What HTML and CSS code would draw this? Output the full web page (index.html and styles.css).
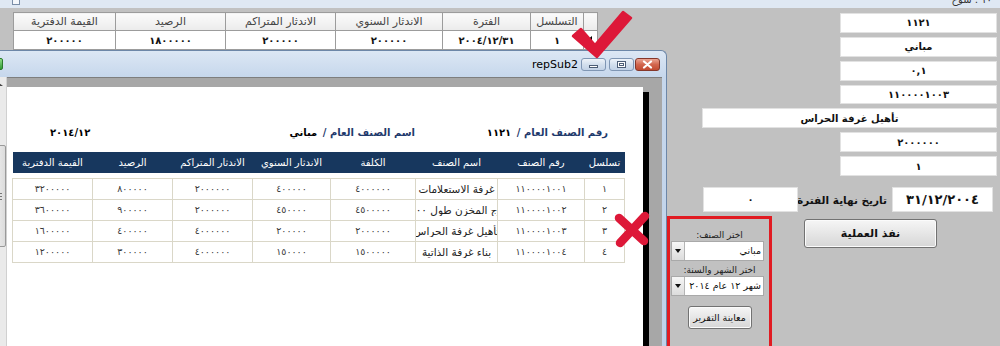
FILE: index.html
```html
<!DOCTYPE html>
<html lang="ar">
<head>
    <meta charset="UTF-8">
    <meta name="viewport" content="width=device-width, initial-scale=1.0">
    <title>repSub2</title>
    <link rel="stylesheet" href="styles.css">
</head>
<body>
<div class="desk">
    <div class="caption">
        <span class="caption-icon"></span>
        <span class="caption-text">١٠ : شوح</span>
    </div>

    <div class="client">
        <div class="grid-wrap">
            <table class="grid">
                <colgroup>
                    <col style="width:14px"><col style="width:53px"><col style="width:88px"><col style="width:107px">
                    <col style="width:110px"><col style="width:110px"><col style="width:102px">
                </colgroup>
                <tr>
                    <th></th><th>التسلسل</th><th>الفترة</th><th>الاندثار السنوي</th>
                    <th>الاندثار المتراكم</th><th>الرصيد</th><th>القيمة الدفترية</th>
                </tr>
                <tr>
                    <td class="sel"><span class="cur"></span></td><td>١</td><td>٢٠٠٤/١٢/٣١</td><td>٢٠٠٠٠٠</td>
                    <td>٢٠٠٠٠٠</td><td>١٨٠٠٠٠٠</td><td>٢٠٠٠٠٠</td>
                </tr>
            </table>
        </div>

        <div class="fields">
            <div class="box">١١٢١</div>
            <div class="box">مباني</div>
            <div class="box">٠,١</div>
            <div class="box">١١٠٠٠٠١٠٠٣</div>
            <div class="box wide">تأهيل غرفة الحراس</div>
            <div class="box">٢٠٠٠٠٠٠</div>
            <div class="box">١</div>
            <div class="date-row">
                <div class="box date">٣١/١٢/٢٠٠٤</div>
                <div class="date-label">تاريخ نهاية الفترة</div>
                <div class="box zero">٠</div>
            </div>
            <div class="bottom-row">
                <div class="panel">
                    <div class="panel-label">اختر الصنف:</div>
                    <div class="combo"><span class="combo-btn"></span><span class="combo-text">مباني</span></div>
                    <div class="panel-label second">اختر الشهر والسنة:</div>
                    <div class="combo"><span class="combo-btn"></span><span class="combo-text">شهر ١٢ عام ٢٠١٤</span></div>
                    <button class="btn preview">معاينة التقرير</button>
                </div>
                <button class="btn run">نفذ العملية</button>
            </div>
        </div>
    </div>

    <!-- child report window -->
    <div class="child">
        <div class="child-title">
            <span class="child-icon"></span>
            <span class="child-name">repSub2</span>
            <span class="cap-btn min"><i></i></span>
            <span class="cap-btn max"><i></i></span>
            <span class="cap-btn close">
                <svg width="11" height="9" viewBox="0 0 11 9"><path d="M2 1.5L9 7.5M9 1.5L2 7.5" stroke="#fff" stroke-width="2.2" stroke-linecap="round"/></svg>
            </span>
        </div>
        <div class="child-body">
            <div class="vscroll">
                <span class="vs-up"></span>
                <span class="vs-thumb"></span>
            </div>
            <div class="viewer">
                <div class="page">
                    <div class="rep-head">
                        <div class="rh-item first"><span class="lbl">رقم الصنف العام /</span> <span class="val">١١٢١</span></div>
                        <div class="rh-item second"><span class="lbl">اسم الصنف العام /</span> <span class="val">مباني</span></div>
                        <div class="rh-item third"><span class="val date">٢٠١٤/١٢</span></div>
                    </div>
                    <table class="rep">
                        <colgroup>
                            <col style="width:40px"><col style="width:87px"><col style="width:82px"><col style="width:85px">
                            <col style="width:78px"><col style="width:80px"><col style="width:80px"><col style="width:80px">
                        </colgroup>
                        <tr>
                            <th>تسلسل</th><th>رقم الصنف</th><th>اسم الصنف</th><th>الكلفة</th>
                            <th>الاندثار السنوي</th><th>الاندثار المتراكم</th><th>الرصيد</th><th>القيمة الدفترية</th>
                        </tr>
                        <tr class="gap"><td colspan="8"></td></tr>
                        <tr>
                            <td>١</td><td>١١٠٠٠٠١٠٠١</td><td class="name"><div class="clip"><span>غرفة الاستعلامات</span></div></td>
                            <td>٤٠٠٠٠٠٠</td><td>٤٠٠٠٠٠</td><td>٢٠٠٠٠٠٠</td><td>٨٠٠٠٠٠</td><td>٣٢٠٠٠٠٠</td>
                        </tr>
                        <tr>
                            <td>٢</td><td>١١٠٠٠٠١٠٠٢</td><td class="name"><div class="clip"><span>سياج المخزن طول ٤٠٠ م</span></div></td>
                            <td>٤٥٠٠٠٠٠</td><td>٤٥٠٠٠٠</td><td>٢٠٠٠٠٠٠</td><td>٩٠٠٠٠٠</td><td>٣٦٠٠٠٠٠</td>
                        </tr>
                        <tr>
                            <td>٣</td><td>١١٠٠٠٠١٠٠٣</td><td class="name"><div class="clip"><span>تأهيل غرفة الحراس</span></div></td>
                            <td>٢٠٠٠٠٠٠</td><td>٢٠٠٠٠٠</td><td>٤٠٠٠٠٠٠</td><td>٤٠٠٠٠٠</td><td>١٦٠٠٠٠٠</td>
                        </tr>
                        <tr>
                            <td>٤</td><td>١١٠٠٠٠١٠٠٤</td><td class="name"><div class="clip"><span>بناء غرفة الذاتية</span></div></td>
                            <td>١٥٠٠٠٠٠</td><td>١٥٠٠٠٠</td><td>٤٠٠٠٠٠٠</td><td>٣٠٠٠٠٠</td><td>١٢٠٠٠٠٠</td>
                        </tr>
                    </table>
                </div>
                <div class="page-shadow"></div>
            </div>
        </div>
    </div>

    <!-- red hand marks drawn over the screenshot -->
    <svg class="mark mark-check" viewBox="0 0 64 52">
        <path d="M3 28L11 21L25 37L53 4L61 10L27 49Z" fill="#dd1838" stroke="#dd1838" stroke-width="2.5" stroke-linejoin="round"/>
    </svg>
    <svg class="mark mark-x" viewBox="0 0 40 38">
        <path d="M7 7L32 30M33 5L8 32" stroke="#dd1838" stroke-width="8.5" stroke-linecap="round"/>
    </svg>
</div>
</body>
</html>
```

FILE: styles.css
```css
*{
    margin: 0;
    padding: 0;
    box-sizing: border-box;
}
body{
    width: 1000px;
    height: 346px;
    overflow: hidden;
    background: #c1c1c1;
    font-family: "DejaVu Sans", sans-serif;
    color: #111;
}
.desk{
    position: relative;
    width: 1000px;
    height: 346px;
    overflow: hidden;
}

/* main window caption strip */
.caption{
    height: 8px;
    background: #dfe8f3;
    overflow: hidden;
    display: flex;
    justify-content: space-between;
    align-items: flex-start;
}
.caption-icon{
    width: 8px;
    height: 5px;
    margin-left: 12px;
    border: 1px solid #7a8ea8;
    border-top: none;
    background: #f4f7fb;
}
.caption-text{
    font-size: 10px;
    line-height: 10px;
    margin-top: -5px;
    padding-right: 8px;
    color: #333;
    direction: rtl;
}

.client{
    display: flex;
    height: 338px;
}

/* top data grid */
.grid-wrap{
    padding: 4px 0 0 13px;
}
.grid{
    width: 584px;
    border-collapse: collapse;
    table-layout: fixed;
    direction: rtl;
    background: #fff;
}
.grid th{
    height: 18px;
    font-size: 11px;
    font-weight: normal;
    color: #444;
    white-space: nowrap;
    background: linear-gradient(#fbfbfb, #ebebeb);
    border: 1px solid #9c9c9c;
}
.grid td{
    height: 19px;
    text-align: center;
    font-size: 10px;
    font-weight: bold;
    border: 1px solid #9c9c9c;
    border-top-color: #cfcfcf;
}
.grid td.sel{
    text-align: left;
    padding-left: 2px;
}
.cur{
    display: inline-block;
    vertical-align: middle;
    border-right: 6px solid #000;
    border-top: 5px solid transparent;
    border-bottom: 5px solid transparent;
}

/* right hand fields */
.fields{
    margin-left: auto;
    width: 333px;
    padding: 5px 3px 0 0;
    display: flex;
    flex-direction: column;
    align-items: flex-end;
    gap: 4px;
}
.box{
    width: 157px;
    height: 21px;
    background: #fff;
    border: 1px solid #e2e2e2;
    display: flex;
    align-items: center;
    justify-content: center;
    direction: rtl;
    font-size: 10px;
    font-weight: bold;
    white-space: nowrap;
}
.box.wide{
    width: 295px;
}
.date-row{
    display: flex;
    direction: rtl;
    align-items: center;
    margin-top: 7px;
}
.box.date{
    width: 101px;
    height: 25px;
    margin-right: 4px;
    font-size: 13px;
}
.date-label{
    width: 80px;
    margin: 0 5px 0 9px;
    text-align: center;
    font-size: 10.5px;
    font-weight: bold;
    white-space: nowrap;
}
.box.zero{
    width: 95px;
    height: 25px;
}
.bottom-row{
    align-self: stretch;
    display: flex;
    justify-content: space-between;
    align-items: flex-start;
}
.panel{
    width: 105px;
    height: 130px;
    border: 3px solid #e11b22;
    border-bottom: none;
    padding-top: 10px;
    display: flex;
    flex-direction: column;
    align-items: center;
    direction: rtl;
}
.panel-label{
    font-size: 9px;
    line-height: 12px;
    color: #222;
}
.panel-label.second{
    margin-top: 3px;
}
.combo{
    width: 93px;
    height: 20px;
    margin-right: 4px;
    background: #fff;
    border: 1px solid #a9a9a9;
    display: flex;
    direction: ltr;
}
.combo-btn{
    width: 13px;
    border-right: 1px solid #b5b5b5;
    background: linear-gradient(#f6f6f6, #dcdcdc);
    display: flex;
    align-items: center;
    justify-content: center;
}
.combo-btn::after{
    content: "";
    border-top: 4px solid #111;
    border-left: 3px solid transparent;
    border-right: 3px solid transparent;
}
.combo-text{
    flex: 1;
    overflow: hidden;
    white-space: nowrap;
    direction: rtl;
    text-align: right;
    padding-right: 2px;
    font-size: 9.5px;
    line-height: 18px;
}
.btn{
    font-family: inherit;
    color: #111;
    background: linear-gradient(#f6f6f6, #e6e6e6 50%, #d6d6d6);
    border: 1px solid #727272;
    border-radius: 3px;
    box-shadow: inset 0 0 0 1px #fbfbfb;
}
.btn.preview{
    width: 64px;
    height: 23px;
    margin-top: 10px;
    font-size: 9.5px;
}
.btn.run{
    width: 133px;
    height: 29px;
    margin: 3px 60px 0 0;
    font-size: 11px;
    font-weight: bold;
}

/* child window repSub2 */
.child{
    position: absolute;
    left: -14px;
    top: 50px;
    width: 681px;
    height: 330px;
    padding: 0 4px;
    border: 1px solid #6d87a8;
    border-bottom: none;
    border-radius: 6px 6px 0 0;
    background: linear-gradient(#dce7f4, #c6d7ec 26px, #bfd2ea);
    display: flex;
    flex-direction: column;
}
.child-title{
    height: 26px;
    flex-shrink: 0;
    display: flex;
    align-items: center;
}
.child-icon{
    width: 12px;
    height: 12px;
    margin-right: auto;
    border: 1px solid #2b7a2e;
    border-radius: 2px;
    background: linear-gradient(#8fdc87, #2f9a35);
}
.child-name{
    font-size: 11px;
    margin-right: 3px;
    color: #000;
}
.cap-btn{
    width: 25px;
    height: 13px;
    border: 1px solid #7f96b4;
    border-radius: 3px;
    background: linear-gradient(#eef3f9, #d3dfed 50%, #c2d2e6);
    display: flex;
    align-items: center;
    justify-content: center;
}
.cap-btn.min{
    margin-right: 3px;
}
.cap-btn.max{
    margin-right: 1px;
}
.cap-btn.close{
    margin-right: 2px;
    border-color: #85372a;
    background: linear-gradient(#eba593, #d2664e 50%, #c14a31);
}
.cap-btn.min i{
    width: 9px;
    height: 3px;
    margin-top: 5px;
    background: #fff;
    border: 1px solid #4d5e76;
}
.cap-btn.max i{
    width: 9px;
    height: 7px;
    background: #fff;
    border: 1px solid #4d5e76;
    box-shadow: inset 0 0 0 1px #fff, inset 0 0 0 2px #4d5e76;
}
.child-body{
    flex: 1;
    display: flex;
}
.vscroll{
    width: 16px;
    background: #eaeaea;
    border-right: 1px solid #d0d0d0;
    display: flex;
    flex-direction: column;
    align-items: center;
}
.vs-up{
    height: 14px;
    display: flex;
    align-items: center;
}
.vs-up::after{
    content: "";
    border-bottom: 3px solid #444;
    border-left: 4px solid transparent;
    border-right: 4px solid transparent;
}
.vs-thumb{
    width: 14px;
    height: 102px;
    margin-top: 54px;
    border: 1px solid #9a9a9a;
    border-radius: 2px;
    background: linear-gradient(90deg, #f3f3f3, #dcdcdc);
    display: flex;
    align-items: center;
    justify-content: center;
}
.vs-thumb::after{
    content: "";
    width: 7px;
    height: 5px;
    border-top: 1px solid #777;
    border-bottom: 1px solid #777;
    background: linear-gradient(#777, #777) center / 100% 1px no-repeat;
}
.viewer{
    flex: 1;
    display: flex;
    align-items: flex-start;
    background: #a7a7a7;
    border-top: 1px solid #7e7e7e;
    padding-top: 9px;
}
.page{
    width: 636px;
    height: 280px;
    background: #fff;
    padding: 0 19px 0 5px;
}
.page-shadow{
    width: 6px;
    height: 275px;
    margin-top: 5px;
    background: #000;
}

/* report content */
.rep-head{
    display: flex;
    direction: rtl;
    height: 18px;
    line-height: 18px;
    margin-top: 35px;
    font-weight: bold;
    white-space: nowrap;
}
.rh-item.first{
    width: 144px;
    padding-right: 16px;
}
.rh-item.second{
    width: 230px;
    padding-right: 65px;
}
.rh-item.third{
    flex: 1;
    text-align: left;
    padding-left: 38px;
}
.rep-head .lbl{
    font-size: 10px;
    color: #1f3a6c;
}
.rep-head .val{
    font-size: 10px;
    color: #000;
}
.rep-head .val.date{
    letter-spacing: 1.5px;
}
.rep{
    width: 612px;
    margin-top: 12px;
    border-collapse: collapse;
    table-layout: fixed;
    direction: rtl;
}
.rep th{
    height: 21px;
    padding: 0;
    background: #17375e;
    color: #fff;
    font-size: 10px;
    font-weight: normal;
    white-space: nowrap;
}
.rep td{
    height: 21px;
    padding: 0;
    border: 1px solid #dad7c8;
    text-align: center;
    font-size: 9.5px;
    color: #3a3a3a;
    white-space: nowrap;
}
.rep tr.gap td{
    height: 5px;
    border: none;
}
.rep td.name{
    font-size: 10.5px;
    color: #222;
}
.clip{
    display: flex;
    justify-content: center;
    overflow: hidden;
}

/* annotation marks */
.mark{
    position: absolute;
    overflow: visible;
}
.mark-check{
    left: 570px;
    top: 8px;
    width: 64px;
    height: 52px;
}
.mark-x{
    left: 612px;
    top: 211px;
    width: 40px;
    height: 38px;
}
```
